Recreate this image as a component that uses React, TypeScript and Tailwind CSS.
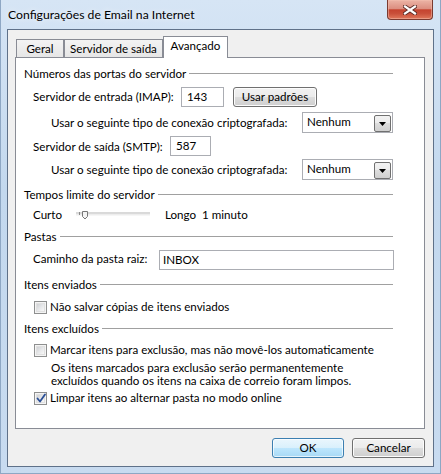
import React from "react";

function Heading({ children, className = "" }: { children: React.ReactNode; className?: string }) {
  return (
    <div className={"flex items-center h-[16px] w-[369px] " + className}>
      <span className="whitespace-nowrap">{children}</span>
      <div className="flex-1 h-px bg-[#a0a0a0] ml-[3px] mt-[-1px]" />
    </div>
  );
}

function CheckBox({ checked = false }: { checked?: boolean }) {
  return (
    <div className="w-[13px] h-[13px] shrink-0 border border-[#8e8f8f] bg-[#f4f4f4] p-[1px]">
      <div className="relative w-full h-full border border-[#e0e0e0] bg-[linear-gradient(135deg,#cfd1d4_0%,#e6e7e9_50%,#f7f7f7_100%)]">
        {checked && (
          <svg className="absolute left-[-1px] top-[-2px]" width="11" height="11" viewBox="0 0 11 11">
            <path d="M1.5 5.5 L4 8.5 L9 1.5" fill="none" stroke="#2a4f96" strokeWidth="1.8" strokeLinejoin="round" strokeLinecap="round" />
          </svg>
        )}
      </div>
    </div>
  );
}

function TextBox({ value, className = "" }: { value: string; className?: string }) {
  return (
    <div className={"h-[20px] border border-[#abadb3] bg-white flex items-center " + className}>
      {value}
    </div>
  );
}

function Select() {
  return (
    <div className="w-[91px] h-[21px] border border-[#abadb3] bg-white flex items-center">
      <span className="flex-1 pl-[4px] mt-[-2px]">Nenhum</span>
      <div className="w-[17px] h-[17px] mr-[1px] mt-[1px] border border-[#707070] rounded-[2px] bg-[linear-gradient(to_bottom,#f2f2f2_0%,#ebebeb_50%,#dddddd_50%,#cfcfcf_100%)] flex items-center justify-center">
        <svg width="7" height="4" viewBox="0 0 7 4" className="mt-[2px]">
          <polygon points="0,0 7,0 3.5,4" fill="#000000" />
        </svg>
      </div>
    </div>
  );
}

function Button({ children, className = "", primary = false }: { children: React.ReactNode; className?: string; primary?: boolean }) {
  return (
    <div
      className={
        "h-[20px] rounded-[3px] border flex items-center justify-center " +
        (primary
          ? "border-[#3c7fb1] bg-[linear-gradient(to_bottom,#eaf6fd_0%,#d9f0fc_50%,#bee6fd_50%,#a7d9f5_100%)] shadow-[inset_0_0_0_1px_#ffffffb0] "
          : "border-[#707070] bg-[linear-gradient(to_bottom,#f2f2f2_0%,#ebebeb_50%,#dddddd_50%,#cfcfcf_100%)] shadow-[inset_0_0_0_1px_#fcfcfc] ") +
        className
      }
    >
      {children}
    </div>
  );
}

function Slider() {
  return (
    <svg width="74" height="16" viewBox="0 0 74 16" className="shrink-0">
      <rect x="0" y="5.5" width="74" height="1" fill="#b4b4b4" />
      <rect x="0" y="6.5" width="74" height="1" fill="#dcdcdc" />
      <rect x="0" y="7.5" width="74" height="1" fill="#eeeeee" />
      <rect x="3" y="5" width="1" height="3" fill="#8a8a8a" />
      <path d="M6.5 4.5 H11.5 V9.5 L9 12 L6.5 9.5 Z" fill="#f3f3f3" stroke="#777777" strokeWidth="1" />
    </svg>
  );
}

function CloseButton() {
  return (
    <div className="absolute top-0 right-[8px] w-[46px] h-[20px] rounded-b-[4px] border border-t-0 border-[#7a3a30] bg-[linear-gradient(to_bottom,#ecb4a6_0%,#dc8f80_45%,#c5432f_52%,#c9503a_72%,#e0785c_100%)] shadow-[inset_0_0_0_1px_#f3c0b080] flex items-center justify-center">
      <svg width="14" height="10" viewBox="0 0 14 10">
        <path d="M2 1.5 L12 8.5 M12 1.5 L2 8.5" stroke="#5a2a24" strokeWidth="4" strokeLinecap="square" />
        <path d="M2 1.5 L12 8.5 M12 1.5 L2 8.5" stroke="#ffffff" strokeWidth="2.2" strokeLinecap="square" />
      </svg>
    </div>
  );
}

export default function App() {
  return (
    <div className="relative w-[441px] h-[474px] overflow-hidden bg-[linear-gradient(to_bottom,#d6e5f5_0%,#c3d8ee_40%,#c8dbf0_100%)] shadow-[inset_1px_0_0_#8ea7c4,inset_-1px_0_0_#8ea7c4,inset_0_-1px_0_#8ea7c4] font-['Lato',sans-serif] text-[11.6px] leading-none text-black">
      <div className="h-[29px] flex items-center pl-[8px] pt-[1px]">
        <span className="text-[12.2px] [text-shadow:0_0_6px_#ffffff]">Configurações de Email na Internet</span>
      </div>
      <CloseButton />

      <div className="mx-[7px] h-[438px] border border-[#5f7189] bg-[#f0f0f0] flex flex-col">
        {/* tabs */}
        <div className="h-[27px] flex items-end pl-[8px]">
          <div className="w-[48px] h-[18px] border border-b-0 border-[#898c95] bg-[linear-gradient(to_bottom,#f3f3f3,#e6e6e6)] flex items-center justify-center">
            Geral
          </div>
          <div className="w-[99px] h-[18px] border border-b-0 border-[#898c95] bg-[linear-gradient(to_bottom,#f3f3f3,#e6e6e6)] flex items-center justify-center">
            Servidor de saída
          </div>
          <div className="relative z-10 w-[65px] h-[22px] mb-[-1px] border border-b-0 border-[#898c95] bg-white flex items-center justify-center pb-[3px]">
            Avançado
          </div>
        </div>

        {/* panel */}
        <div className="ml-[7px] w-[410px] h-[372px] border border-[#898c95] bg-white flex flex-col pl-[8px] pt-[8px]">
          <Heading>Números das portas do servidor</Heading>

          <div className="mt-[5px] h-[20px] flex items-center pl-[9px]">
            <span className="w-[148px]">Servidor de entrada (IMAP):</span>
            <TextBox value="143" className="w-[43px] pl-[5px]" />
            <Button className="ml-[9px] w-[84px]">Usar padrões</Button>
          </div>

          <div className="mt-[5px] h-[21px] flex items-center pl-[27px]">
            <span className="w-[251px] mt-[1px]">Usar o seguinte tipo de conexão criptografada:</span>
            <Select />
          </div>

          <div className="mt-[3px] h-[20px] flex items-center pl-[9px]">
            <span className="w-[137px] mt-[1px]">Servidor de saída (SMTP):</span>
            <TextBox value="587" className="w-[41px] pl-[5px]" />
          </div>

          <div className="mt-[3px] h-[21px] flex items-center pl-[27px]">
            <span className="w-[251px] mt-[1px]">Usar o seguinte tipo de conexão criptografada:</span>
            <Select />
          </div>

          <Heading className="mt-[7px]">Tempos limite do servidor</Heading>

          <div className="mt-[4px] h-[16px] flex items-center pl-[9px]">
            <span className="w-[43px]">Curto</span>
            <Slider />
            <span className="ml-[15px]">Longo</span>
            <span className="ml-[6px]">1 minuto</span>
          </div>

          <Heading className="mt-[6px]">Pastas</Heading>

          <div className="mt-[5px] h-[20px] flex items-center pl-[9px]">
            <span className="w-[126px] mt-[-2px]">Caminho da pasta raiz:</span>
            <TextBox value="INBOX" className="w-[235px] pl-[3px]" />
          </div>

          <Heading className="mt-[7px]">Itens enviados</Heading>

          <div className="mt-[6px] h-[16px] flex items-center pl-[10px]">
            <CheckBox />
            <span className="ml-[3px]">Não salvar cópias de itens enviados</span>
          </div>

          <Heading className="mt-[6px]">Itens excluídos</Heading>

          <div className="mt-[5px] h-[16px] flex items-center pl-[10px]">
            <CheckBox />
            <span className="ml-[3px]">Marcar itens para exclusão, mas não movê-los automaticamente</span>
          </div>

          <div className="mt-[3px] pl-[27px]">
            <div className="h-[13px] flex items-center">Os itens marcados para exclusão serão permanentemente</div>
            <div className="h-[13px] flex items-center">excluídos quando os itens na caixa de correio foram limpos.</div>
          </div>

          <div className="mt-[3px] h-[16px] flex items-center pl-[10px]">
            <CheckBox checked />
            <span className="ml-[3px]">Limpar itens ao alternar pasta no modo online</span>
          </div>
        </div>

        {/* buttons */}
        <div className="mt-[9px] flex justify-end pr-[8px]">
          <Button primary className="w-[72px]">OK</Button>
          <Button className="ml-[8px] w-[73px]">Cancelar</Button>
        </div>
      </div>
    </div>
  );
}
